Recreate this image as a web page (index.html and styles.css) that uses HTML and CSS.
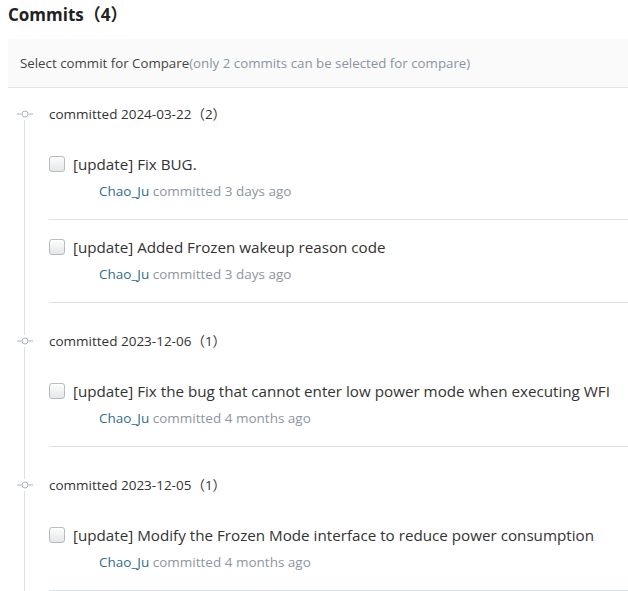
FILE: index.html
```html
<!DOCTYPE html>
<html lang="en">

<head>
    <meta charset="UTF-8">
    <meta name="viewport" content="width=device-width, initial-scale=1.0">
    <title>Commits</title>
    <link rel="stylesheet" href="styles.css">
</head>

<body>
    <h2 class="title">Commits（4）</h2>
    <div class="compare-bar">
        Select commit for Compare<span class="hint">(only 2 commits can be selected for compare)</span>
    </div>

    <div class="timeline">
        <div class="group">
            <div class="group-head">
                <svg class="commit-icon" width="16" height="8" viewBox="0 0 16 8">
                    <path d="M0 4H4.5M11.5 4H16" stroke="#aab2bc" stroke-width="1" />
                    <circle cx="8" cy="4" r="3" fill="#fff" stroke="#aab2bc" stroke-width="1" />
                </svg>
                committed 2024-03-22（2）
            </div>
            <div class="commit">
                <label class="commit-title"><input type="checkbox"> [update] Fix BUG.</label>
                <div class="commit-meta"><a href="#">Chao_Ju</a> committed 3 days ago</div>
            </div>
            <div class="commit">
                <label class="commit-title"><input type="checkbox"> [update] Added Frozen wakeup reason code</label>
                <div class="commit-meta"><a href="#">Chao_Ju</a> committed 3 days ago</div>
            </div>
        </div>

        <div class="group">
            <div class="group-head">
                <svg class="commit-icon" width="16" height="8" viewBox="0 0 16 8">
                    <path d="M0 4H4.5M11.5 4H16" stroke="#aab2bc" stroke-width="1" />
                    <circle cx="8" cy="4" r="3" fill="#fff" stroke="#aab2bc" stroke-width="1" />
                </svg>
                committed 2023-12-06（1）
            </div>
            <div class="commit">
                <label class="commit-title"><input type="checkbox"> [update] Fix the bug that cannot enter low power mode when executing WFI</label>
                <div class="commit-meta"><a href="#">Chao_Ju</a> committed 4 months ago</div>
            </div>
        </div>

        <div class="group">
            <div class="group-head">
                <svg class="commit-icon" width="16" height="8" viewBox="0 0 16 8">
                    <path d="M0 4H4.5M11.5 4H16" stroke="#aab2bc" stroke-width="1" />
                    <circle cx="8" cy="4" r="3" fill="#fff" stroke="#aab2bc" stroke-width="1" />
                </svg>
                committed 2023-12-05（1）
            </div>
            <div class="commit">
                <label class="commit-title"><input type="checkbox"> [update] Modify the Frozen Mode interface to reduce power consumption</label>
                <div class="commit-meta"><a href="#">Chao_Ju</a> committed 4 months ago</div>
            </div>
        </div>
    </div>
</body>

</html>
```

FILE: styles.css
```css
html {
    font-family: "Open Sans", "Noto Sans CJK SC", sans-serif;
    color: #333;
}

body {
    margin: 0 0 0 8px;
    overflow: hidden;
}

.title {
    margin: 0;
    padding-top: 4px;
    height: 35px;
    font-size: 17px;
    line-height: 22px;
    font-weight: 700;
    color: #222;
}

.compare-bar {
    background: #fafafa;
    border-bottom: 1px solid #e3e3e3;
    height: 48px;
    line-height: 48px;
    padding-left: 12px;
    font-size: 13.3px;
    color: #444;
}

.compare-bar .hint {
    color: #8a94a3;
}

.timeline {
    padding-top: 15px;
}

.group {
    position: relative;
}

/* vertical line of the timeline, stops just above the next icon */
.group::before {
    content: "";
    position: absolute;
    left: 16px;
    top: 17px;
    bottom: -32px;
    width: 1px;
    background: #dde2e8;
}

.group-head {
    position: relative;
    height: 22px;
    line-height: 22px;
    padding-left: 41px;
    font-size: 13.5px;
    color: #333;
}

.commit-icon {
    position: absolute;
    left: 9px;
    top: 7px;
}

.group-head + .commit {
    margin-top: 12px;
}

.commit {
    margin-left: 41px;
    padding: 17px 0 18px;
    border-bottom: 1px solid #dde2e8;
}

.group + .group {
    margin-top: 27px;
}

.commit-title {
    display: flex;
    align-items: center;
    gap: 8px;
    font-size: 15.2px;
    line-height: 20px;
    color: #333;
}

.commit-title input {
    appearance: none;
    margin: 0;
    width: 16px;
    height: 16px;
    border: 1px solid #b8bcc2;
    border-radius: 3px;
    background: linear-gradient(#fdfdfd, #e4e6e9);
    box-shadow: inset 0 1px 0 #fff;
}

.commit-meta {
    margin-top: 7px;
    padding-left: 50px;
    font-size: 13.5px;
    line-height: 20px;
    color: #8c96a3;
}

.commit-meta a {
    color: #2f6f8f;
    text-decoration: none;
}
```
